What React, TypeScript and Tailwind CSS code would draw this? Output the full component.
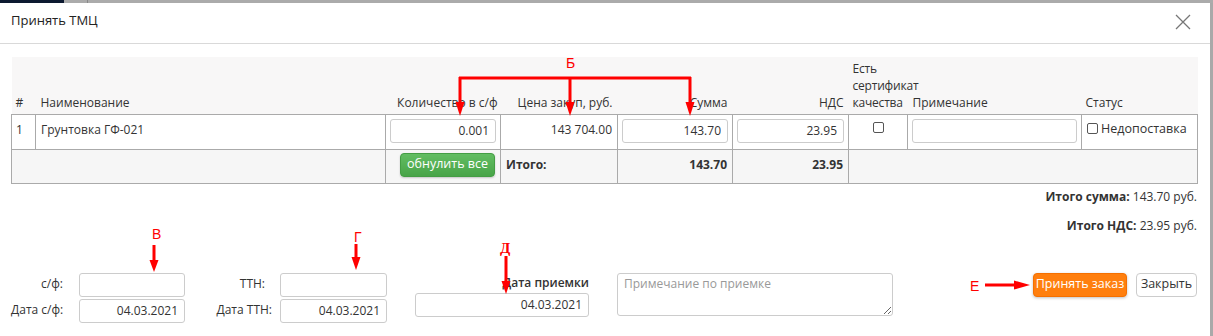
import React from "react";

const inputCls =
  "w-full h-[24px] border border-[#ccc] rounded-[3px] bg-white px-[6px] text-right text-[12px] text-[#333] outline-none";

function Arrows() {
  const red = "#ff0000";
  return (
    <svg className="absolute left-0 top-0 pointer-events-none" width={1213} height={336}>
      {/* Б bracket */}
      <line x1={459} y1={78} x2={691} y2={78} stroke={red} strokeWidth={3} />
      {[460, 570, 690].map((x) => (
        <g key={x}>
          <line x1={x} y1={77} x2={x} y2={104} stroke={red} strokeWidth={3} />
          <polygon points={`${x - 4.5},102 ${x + 4.5},102 ${x},116`} fill={red} />
        </g>
      ))}
      {/* В */}
      <line x1={154} y1={245} x2={154} y2={262} stroke={red} strokeWidth={3} />
      <polygon points="149.5,260 158.5,260 154,272" fill={red} />
      {/* Г */}
      <line x1={356} y1={244} x2={356} y2={259} stroke={red} strokeWidth={3} />
      <polygon points="351.5,257 360.5,257 356,270" fill={red} />
      {/* Д */}
      <line x1={506} y1={256} x2={506} y2={283} stroke={red} strokeWidth={3} />
      <polygon points="501.5,281 510.5,281 506,294" fill={red} />
      {/* Е */}
      <line x1={985} y1={285} x2={1016} y2={285} stroke={red} strokeWidth={3} />
      <polygon points="1014,280.5 1014,289.5 1030,285" fill={red} />
    </svg>
  );
}

export default function App() {
  return (
    <div
      className="relative w-[1213px] h-[336px] overflow-hidden bg-white text-[12px] text-[#333]"
      style={{ fontFamily: "'Open Sans', 'Noto Sans', sans-serif" }}
    >
      {/* top strip */}
      <div className="flex h-[3px]">
        <div className="w-[64px] bg-[#0c1930]" />
        <div className="w-[23px] bg-[#ababab]" />
        <div className="w-[1px] bg-[#888]" />
        <div className="flex-1 bg-[#ababab]" />
      </div>
      <div className="flex">
        <div className="w-[1210px] flex flex-col">
          {/* header */}
          <div className="h-[41px] flex items-center justify-between pl-[11px] pr-[19px] border-b border-[#d9d9d9]">
            <span className="text-[13px] text-[#222] -mt-[5px]">Принять ТМЦ</span>
            <svg width="16" height="16" viewBox="0 0 16 16" className="-mt-[3px]">
              <path d="M1 1 L15 15 M15 1 L1 15" stroke="#777" strokeWidth="1.3" fill="none" />
            </svg>
          </div>
          {/* body */}
          <div className="pl-[11px] pr-[13px] pt-[13px]">
            <table className="table-fixed border-collapse w-[1186px]">
              <colgroup>
                <col className="w-[24px]" />
                <col className="w-[350px]" />
                <col className="w-[115px]" />
                <col className="w-[117px]" />
                <col className="w-[115px]" />
                <col className="w-[116px]" />
                <col className="w-[59px]" />
                <col className="w-[174px]" />
                <col className="w-[116px]" />
              </colgroup>
              <thead>
                <tr className="h-[57px] bg-[#f8f7f7] align-bottom leading-[17px]">
                  <th className="font-normal text-left pl-[4px] pb-[3px]">#</th>
                  <th className="font-normal text-left pl-[5px] pb-[3px]">Наименование</th>
                  <th className="font-normal text-right pr-[3px] pb-[3px]">Количество в с/ф</th>
                  <th className="font-normal text-right pr-[5px] pb-[3px]">Цена закуп, руб.</th>
                  <th className="font-normal text-right pr-[5px] pb-[3px]">Сумма</th>
                  <th className="font-normal text-right pr-[5px] pb-[3px]">НДС</th>
                  <th className="font-normal text-left pl-[4px] pb-[3px] tracking-[-0.2px]">Есть сертификат качества</th>
                  <th className="font-normal text-left pl-[5px] pb-[3px]">Примечание</th>
                  <th className="font-normal text-left pl-[4px] pb-[3px]">Статус</th>
                </tr>
              </thead>
              <tbody>
                <tr className="h-[35px] align-top">
                  <td className="border border-[#aaa] pl-[4px] pt-[6px]">1</td>
                  <td className="border border-[#aaa] pl-[5px] pt-[6px]">Грунтовка ГФ-021</td>
                  <td className="border border-[#aaa] px-[4px] pt-[4px]">
                    <input className={inputCls} defaultValue="0.001" />
                  </td>
                  <td className="border border-[#aaa] text-right pr-[5px] pt-[6px]">143 704.00</td>
                  <td className="border border-[#aaa] px-[4px] pt-[4px]">
                    <input className={inputCls} defaultValue="143.70" />
                  </td>
                  <td className="border border-[#aaa] px-[4px] pt-[4px]">
                    <input className={inputCls} defaultValue="23.95" />
                  </td>
                  <td className="border border-[#aaa] pt-[7px]">
                    <div className="flex justify-center">
                      <span className="w-[11px] h-[11px] border border-[#555] rounded-[2px] bg-white" />
                    </div>
                  </td>
                  <td className="border border-[#aaa] px-[4px] pt-[4px]">
                    <input className={inputCls} defaultValue="" />
                  </td>
                  <td className="border border-[#aaa] pl-[5px] pt-[5px]">
                    <div className="flex items-center gap-[3px] text-[12.5px]">
                      <span className="w-[11px] h-[11px] border border-[#555] rounded-[2px] bg-white" />
                      <span>Недопоставка</span>
                    </div>
                  </td>
                </tr>
                <tr className="h-[34px] bg-[#f6f6f6] align-top font-bold">
                  <td className="border border-[#aaa]" colSpan={2}></td>
                  <td className="border border-[#aaa] pr-[5px] pt-[3px]">
                    <div className="flex justify-end">
                      <button className="h-[24px] px-[6px] rounded-[4px] bg-gradient-to-b from-[#62bd62] to-[#48a448] text-white font-normal text-[12.5px] border border-[#449d44] shadow-[0_1px_2px_rgba(0,0,0,0.2)]">
                        обнулить все
                      </button>
                    </div>
                  </td>
                  <td className="border border-[#aaa] pl-[5px] pt-[6px]">Итого:</td>
                  <td className="border border-[#aaa] text-right pr-[5px] pt-[6px]">143.70</td>
                  <td className="border border-[#aaa] text-right pr-[5px] pt-[6px]">23.95</td>
                  <td className="border border-[#aaa]" colSpan={3}></td>
                </tr>
              </tbody>
            </table>
            <div className="w-[1186px] flex flex-col items-end mt-[4px] gap-[12px] leading-[17px]">
              <div>
                <b>Итого сумма:</b> 143.70 руб.
              </div>
              <div>
                <b>Итого НДС:</b> 23.95 руб.
              </div>
            </div>
            {/* bottom form */}
            <div className="w-[1186px] flex items-start mt-[39px]">
              <div className="grid grid-cols-[60px_106px] gap-x-[8px] gap-y-[2px] items-center">
                <span className="text-right pr-[8px] -mt-[2px]">с/ф:</span>
                <input className={inputCls} defaultValue="" />
                <span className="text-left -mt-[2px]">Дата с/ф:</span>
                <input className={inputCls} defaultValue="04.03.2021" />
              </div>
              <div className="ml-[28px] grid grid-cols-[59px_107px] gap-x-[8px] gap-y-[2px] items-center">
                <span className="text-right pr-[7px] -mt-[2px]">ТТН:</span>
                <input className={inputCls} defaultValue="" />
                <span className="text-right -mt-[2px]">Дата ТТН:</span>
                <input className={inputCls} defaultValue="04.03.2021" />
              </div>
              <div className="ml-[28px] w-[174px] flex flex-col items-end pt-[1px]">
                <span className="font-semibold leading-[17px] mb-[2px]">Дата приемки</span>
                <input className={inputCls} defaultValue="04.03.2021" />
              </div>
              <textarea
                className="ml-[28px] w-[276px] h-[43px] border border-[#ccc] rounded-[3px] px-[6px] py-[1px] text-[12px] outline-none resize-y placeholder:text-[#999]"
                placeholder="Примечание по приемке"
              />
              <div className="flex-1" />
              <button className="h-[24px] w-[94px] rounded-[4px] bg-[#ff7f0e] border border-[#f57000] text-white text-[12.5px] shadow-[0_1px_3px_rgba(0,0,0,0.25)]">
                Принять заказ
              </button>
              <button className="ml-[9px] h-[24px] w-[61px] rounded-[4px] bg-white border border-[#ccc] text-[#333] text-[12.5px]">
                Закрыть
              </button>
            </div>
          </div>
        </div>
        <div className="w-[3px] h-[333px] bg-[#a9a9a9]" />
      </div>

      <Arrows />
      <span className="absolute left-[566px] top-[53px] text-[14px] text-[#ff0000]" style={{ fontFamily: "'Liberation Sans', sans-serif" }}>Б</span>
      <span className="absolute left-[152px] top-[224px] text-[14px] text-[#ff0000]" style={{ fontFamily: "'Liberation Sans', sans-serif" }}>В</span>
      <span className="absolute left-[354px] top-[227px] text-[14px] text-[#ff0000]" style={{ fontFamily: "'Liberation Sans', sans-serif" }}>Г</span>
      <span className="absolute left-[500px] top-[237px] text-[15px] font-bold text-[#ff0000]" style={{ fontFamily: "'Liberation Serif', serif" }}>Д</span>
      <span className="absolute left-[970px] top-[276px] text-[14px] text-[#ff0000]" style={{ fontFamily: "'Liberation Sans', sans-serif" }}>Е</span>
    </div>
  );
}
